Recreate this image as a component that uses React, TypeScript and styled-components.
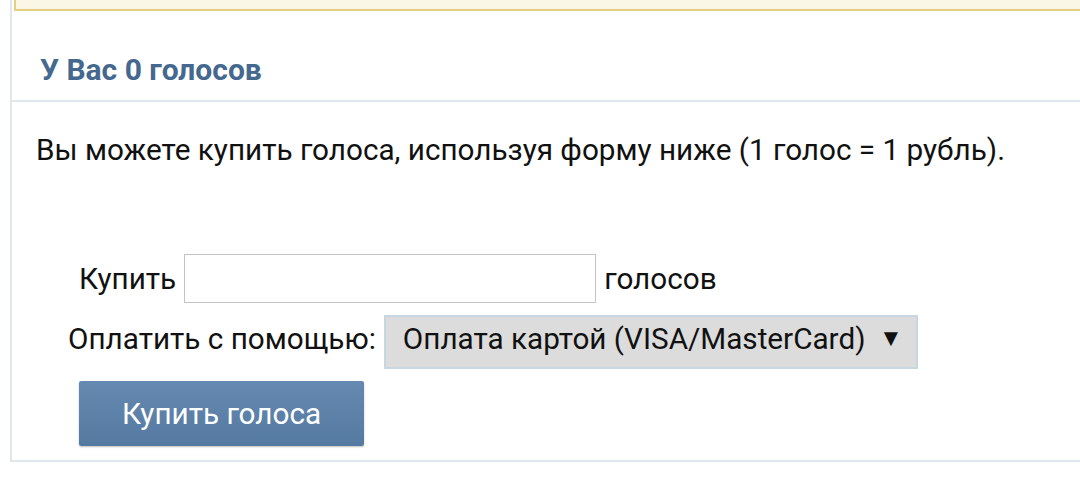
import { createGlobalStyle, styled } from 'styled-components'

const colors = {
  title: '#45688e',
  text: '#111111',
  border: '#e1e6eb',
  notice: '#faf7e6',
  noticeBorder: '#e3cf82',
  selectBg: '#dcdcdc',
  selectBorder: '#c8d6e3',
}

const fontSize = '29.7px'

const GlobalStyle = createGlobalStyle`
  html, body {
    margin: 0;
    padding: 0;
    background: #ffffff;
    overflow: hidden;
  }
  body {
    font-family: Roboto, 'Liberation Sans', sans-serif;
    color: ${colors.text};
  }
`

export default function App() {
  return (
    <>
      <GlobalStyle />
      <Page>
        <Panel>
          <Notice />
          <Header>
            <h2>У Вас 0 голосов</h2>
          </Header>
          <Content>
            <Info>Вы можете купить голоса, используя форму ниже (1 голос = 1 рубль).</Info>
            <Form onSubmit={(e) => e.preventDefault()}>
              <Row $indent={67}>
                <Label>Купить</Label>
                <Input type="text" />
                <Label>голосов</Label>
              </Row>
              <Row $indent={56} $baseline>
                <Label>Оплатить с помощью:</Label>
                <Select>
                  <span>Оплата картой (VISA/MasterCard)</span>
                  <span className="arrow">▼</span>
                </Select>
              </Row>
              <Row $indent={67}>
                <Button type="submit">Купить голоса</Button>
              </Row>
            </Form>
          </Content>
        </Panel>
      </Page>
    </>
  )
}

const Page = styled.div`
  width: 1080px;
  height: 484px;
  padding-left: 10px;
  box-sizing: border-box;
  overflow: hidden;
`

const Panel = styled.section`
  width: 1120px;
  border-left: 2px solid ${colors.border};
  border-bottom: 2px solid ${colors.border};
  box-sizing: border-box;
`

const Notice = styled.div`
  height: 41px;
  box-sizing: border-box;
  margin: -30px 0 0 2px;
  background: ${colors.notice};
  border: 2px solid ${colors.noticeBorder};
`

const Header = styled.div`
  height: 91px;
  box-sizing: border-box;
  display: flex;
  align-items: flex-end;
  border-bottom: 2px solid ${colors.border};

  h2 {
    margin: 0 0 15px 28px;
    font-size: 30px;
    line-height: 30px;
    font-weight: 700;
    color: ${colors.title};
  }
`

const Content = styled.div`
  padding: 30px 0 14px;
`

const Info = styled.p`
  margin: 0 0 86px 24px;
  font-size: ${fontSize};
  line-height: 36px;
`

const Form = styled.form`
  display: flex;
  flex-direction: column;
  gap: 12px;
`

const Row = styled.div<{ $indent: number; $baseline?: boolean }>`
  display: flex;
  align-items: ${(p) => (p.$baseline ? 'baseline' : 'center')};
  gap: 8px;
  padding-left: ${(p) => p.$indent}px;
`

const Label = styled.span`
  font-size: ${fontSize};
`

const Input = styled.input`
  width: 412px;
  height: 49px;
  box-sizing: border-box;
  border: 1px solid #c4c4c4;
  background: #ffffff;
`

const Select = styled.div`
  width: 534px;
  height: 54px;
  box-sizing: border-box;
  display: flex;
  align-items: center;
  justify-content: space-between;
  padding: 0 13px 8px 17px;
  background: ${colors.selectBg};
  border: 2px solid ${colors.selectBorder};
  font-size: ${fontSize};

  .arrow {
    font-size: 24px;
  }
`

const Button = styled.button`
  width: 285px;
  height: 65px;
  border: none;
  border-radius: 2px;
  background: linear-gradient(#6589b0, #557aa2);
  box-shadow: 0 1px 2px rgba(0, 0, 0, 0.25);
  color: #ffffff;
  font-family: Roboto, 'Liberation Sans', sans-serif;
  font-size: ${fontSize};
  cursor: pointer;
`
